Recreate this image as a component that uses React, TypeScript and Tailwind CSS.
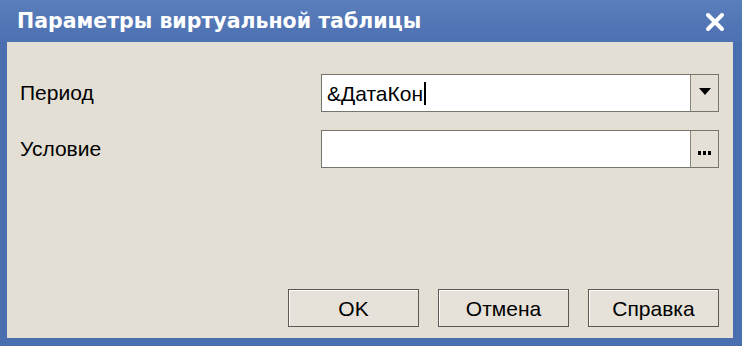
import React from "react";

function Field({ children, button }: { children?: React.ReactNode; button: React.ReactNode }) {
  return (
    <div className="flex h-[38px] w-[398px] border border-[#77766c] bg-white">
      <div className="flex flex-1 items-center pl-[5px] text-[21px] leading-none text-black">{children}</div>
      <div className="flex w-[28px] items-end justify-center border-l border-[#8a887e] bg-[#e4e0d6] pb-[12px]">{button}</div>
    </div>
  );
}

function Btn({ label }: { label: string }) {
  return (
    <div className="flex h-[38px] w-[131px] items-center justify-center border border-[#5b5a52] bg-[#e6e2d9] text-[21px] leading-none text-black shadow-[inset_1px_1px_0_#fbfaf6]">
      {label}
    </div>
  );
}

export default function App() {
  return (
    <div
      className="flex h-[346px] w-[742px] flex-col bg-[#4a6fb0]"
      style={{ fontFamily: '"Liberation Sans", "DejaVu Sans", sans-serif' }}
    >
      <div className="flex h-[42px] items-center justify-between bg-gradient-to-b from-[#5a7dbb] to-[#4d71b1] pl-[17px] pr-[17px]">
        <span
          className="text-[20.5px] font-bold text-white"
          style={{ fontFamily: '"DejaVu Sans", sans-serif' }}
        >
          Параметры виртуальной таблицы
        </span>
        <svg width="20" height="20" viewBox="0 0 20 20" className="mt-[2px]">
          <path d="M3 3 L17 17 M17 3 L3 17" stroke="white" strokeWidth="4" strokeLinecap="round" />
        </svg>
      </div>
      <div className="mb-[8px] ml-[7px] mr-[9px] flex flex-1 flex-col bg-[#e3dfd5] pl-[13px] pr-[14px]">
        <div className="mt-[32px] flex items-center">
          <div className="w-[301px] text-[21px] text-black">Период</div>
          <Field
            button={
              <svg width="12" height="8" viewBox="0 0 12 8" className="mb-[3px]">
                <path d="M0 0 L12 0 L6 7 Z" fill="black" />
              </svg>
            }
          >
            <span>&amp;ДатаКон</span>
            <span className="ml-[1px] inline-block h-[23px] w-[2px] bg-black" />
          </Field>
        </div>
        <div className="mt-[18px] flex items-center">
          <div className="w-[301px] text-[21px] text-black">Условие</div>
          <Field
            button={
              <div className="flex gap-[2px]">
                <span className="h-[4px] w-[3px] bg-black" />
                <span className="h-[4px] w-[3px] bg-black" />
                <span className="h-[4px] w-[3px] bg-black" />
              </div>
            }
          />
        </div>
        <div className="mt-auto mb-[11px] flex justify-end gap-[19px]">
          <Btn label="OK" />
          <Btn label="Отмена" />
          <Btn label="Справка" />
        </div>
      </div>
    </div>
  );
}
